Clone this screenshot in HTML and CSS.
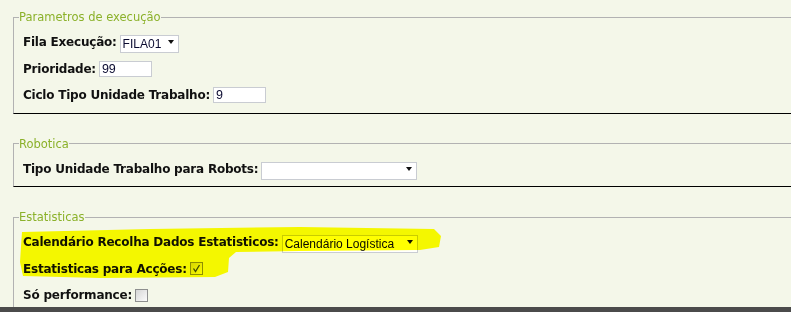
FILE: index.html
```html
<!DOCTYPE html>
<html>
<head>
	<meta charset="utf-8">
	<link rel="stylesheet" href="styles.css">
</head>
<body>
	<div class="page">
		<div class="content">
			<fieldset class="group">
				<legend>Parametros de execução</legend>
				<div class="row">
					<label>Fila Execução:</label>
					<span class="combo w-fila"><select><option>FILA01</option></select></span>
				</div>
				<div class="row">
					<label>Prioridade:</label>
					<input type="text" class="field" value="99">
				</div>
				<div class="row">
					<label>Ciclo Tipo Unidade Trabalho:</label>
					<input type="text" class="field" value="9">
				</div>
			</fieldset>

			<fieldset class="group">
				<legend>Robotica</legend>
				<div class="row">
					<label>Tipo Unidade Trabalho para Robots:</label>
					<span class="combo w-robots"><select><option></option></select></span>
				</div>
			</fieldset>

			<fieldset class="group">
				<legend>Estatisticas</legend>
				<div class="row">
					<label>Calendário Recolha Dados Estatisticos:</label>
					<span class="combo w-cal"><select><option>Calendário Logística</option></select></span>
				</div>
				<div class="row">
					<label>Estatisticas para Acções:</label>
					<span class="check checked">
						<svg width="9" height="9" viewBox="0 0 9 9"><path d="M1.5 4.5 L3.5 7.5 L7.5 1" fill="none" stroke="#3d4a2a" stroke-width="1.3"/></svg>
					</span>
				</div>
				<div class="row">
					<label>Só performance:</label>
					<span class="check"></span>
				</div>
			</fieldset>

			<!-- highlighter marks drawn over the statistics rows -->
			<svg class="marker" width="791" height="312" viewBox="0 0 791 312">
				<path d="M22 232 L150 229 L300 227 L434 229 L441 236 L439 247 L420 250 L300 251 L236 252 L229 258 L228 272 L215 277 L100 278 L23 276 L20 262 L21 246 Z" fill="#ffff00"/>
			</svg>
		</div>
		<div class="statusbar"></div>
	</div>
</body>
</html>
```

FILE: styles.css
```css
html, body {
	margin: 0;
	padding: 0;
	height: 100%;
	overflow: hidden;
}

body {
	background: #f4f7e9;
	font-family: "DejaVu Sans", Verdana, sans-serif;
	color: #111;
}

.page {
	display: flex;
	flex-direction: column;
	height: 100%;
}

.content {
	flex: 1;
	position: relative;
	overflow: hidden;
	padding: 10px 0 0 13px;
}

.group {
	width: 900px;
	margin: 0 0 23px 0;
	padding: 5px 0 4px 9px;
	border: 0;
	border-top: 1px solid #b2b2b2;
	border-left: 1px solid #b2b2b2;
	border-bottom: 1px solid #000;
}

.group legend {
	padding: 0;
	margin-left: -4px;
	font-size: 11.5px;
	line-height: 14px;
	color: #8bb12a;
}

.row {
	display: flex;
	align-items: center;
	height: 26.5px;
}

.row label {
	font-weight: bold;
	font-size: 12px;
	letter-spacing: -0.22px;
	margin-right: 3px;
}

.field {
	width: 53px;
	height: 16px;
	box-sizing: border-box;
	border: 1px solid #c9ccd2;
	background: #fff;
	padding: 0 2px;
	font-family: "Liberation Sans", Arial, sans-serif;
	font-size: 12.5px;
	color: #0a0a30;
	outline: none;
}

.combo {
	position: relative;
	display: inline-block;
	height: 18px;
}

.combo select {
	appearance: none;
	-webkit-appearance: none;
	width: 100%;
	height: 100%;
	box-sizing: border-box;
	border: 1px solid #c9ccd2;
	border-radius: 0;
	background: #fff;
	padding: 0 0 0 2px;
	margin: 0;
	font-family: "Liberation Sans", Arial, sans-serif;
	font-size: 12px;
	color: #0a0a30;
}

.combo::after {
	content: "";
	position: absolute;
	right: 5px;
	top: 7px;
	border-left: 3.5px solid transparent;
	border-right: 3.5px solid transparent;
	border-top: 4px solid #111;
	pointer-events: none;
}

.w-fila { width: 59px; }
.w-robots { width: 156px; }
.w-cal { width: 136px; }

.check {
	display: inline-flex;
	align-items: center;
	justify-content: center;
	width: 13px;
	height: 13px;
	box-sizing: border-box;
	border: 1px solid #8e8f8f;
	background: linear-gradient(135deg, #d6d6d6, #fbfbfb);
}

.marker {
	position: absolute;
	left: 0;
	top: 0;
	mix-blend-mode: multiply;
	pointer-events: none;
}

.statusbar {
	height: 5px;
	background: #4b4b4b;
}
```
